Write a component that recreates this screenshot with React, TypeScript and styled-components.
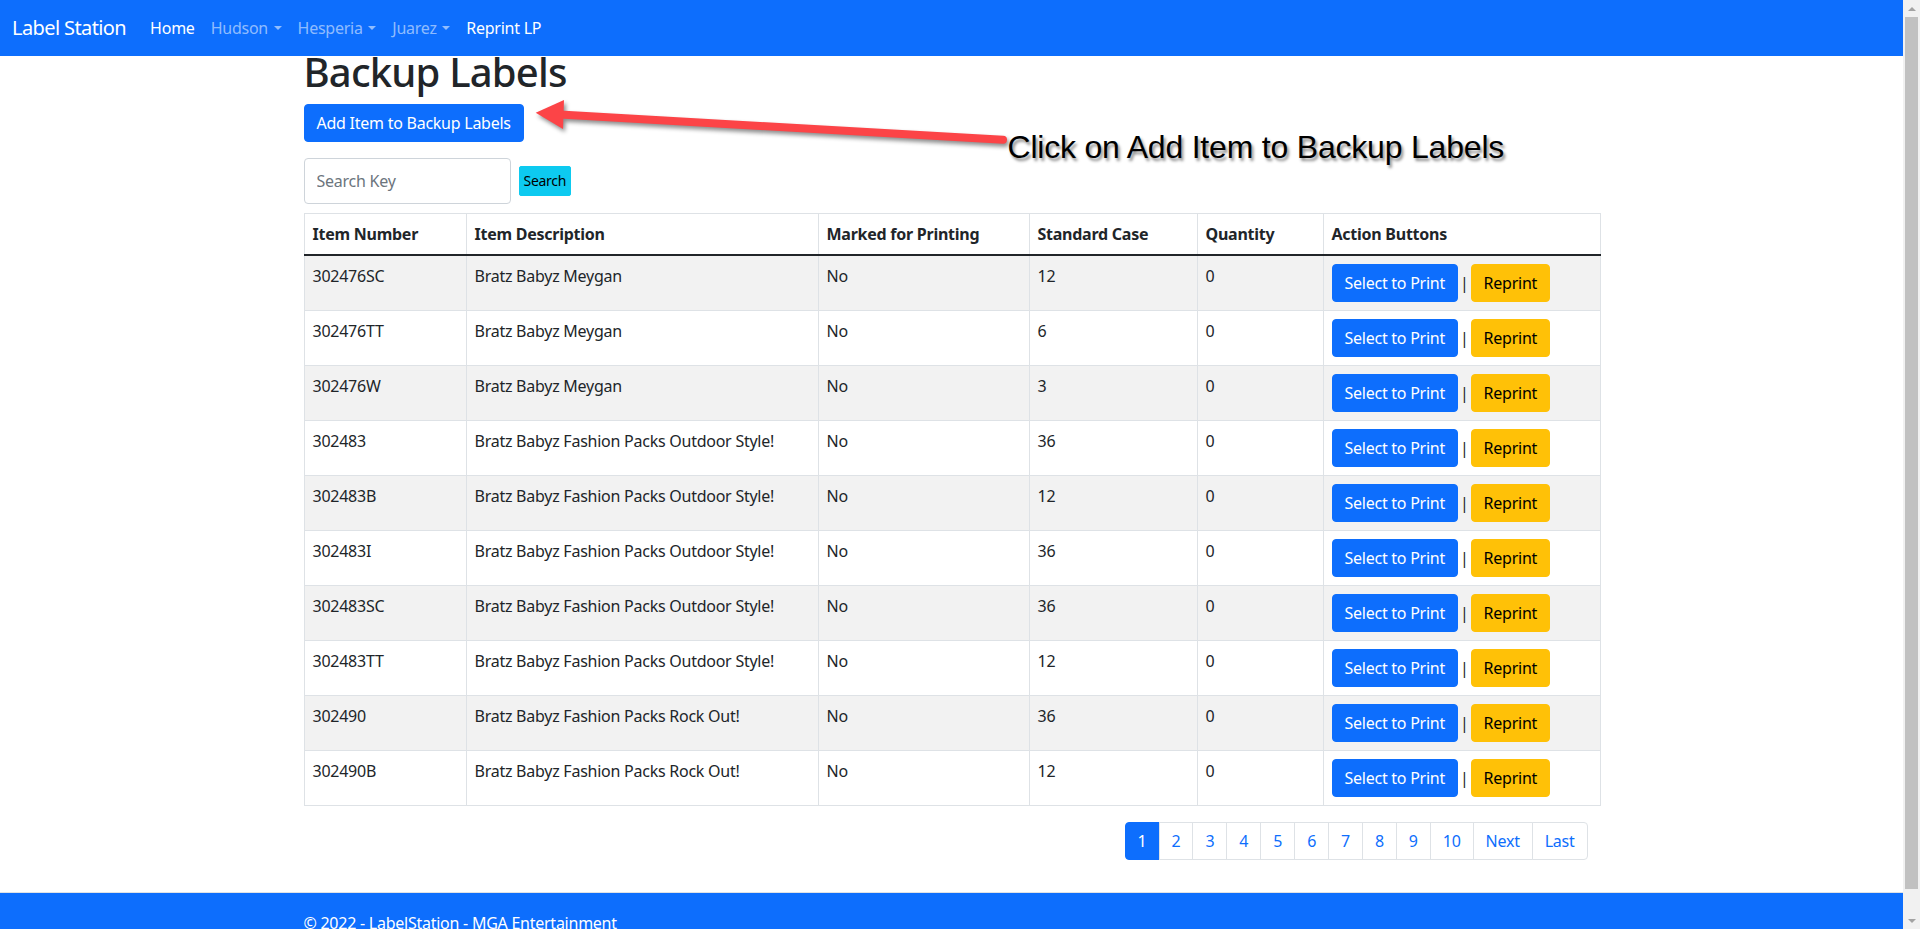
import React from "react";
import styled, { createGlobalStyle } from "styled-components";

const GlobalStyle = createGlobalStyle`
  *, *::before, *::after { box-sizing: border-box; }
  html, body { margin: 0; padding: 0; }
  body {
    font-family: "Segoe UI", "Noto Sans", "Open Sans", sans-serif;
    font-size: 16px;
    line-height: 1.5;
    letter-spacing: -0.25px;
    color: #212529;
    background: #fff;
  }
`;

const Shell = styled.div`
  display: flex;
  align-items: flex-start;
`;

const Page = styled.div`
  flex: 1;
  min-width: 0;
`;

const ScrollTrack = styled.aside`
  position: sticky;
  top: 0;
  width: 17px;
  height: 100vh;
  flex-shrink: 0;
  background: #f1f1f1;
  display: flex;
  flex-direction: column;
`;

const ScrollArrow = styled.div<{ $down?: boolean }>`
  height: 17px;
  display: flex;
  align-items: center;
  justify-content: center;
  &::after {
    content: "";
    border-left: 4px solid transparent;
    border-right: 4px solid transparent;
    ${(p) => (p.$down ? "border-top: 4px solid #a3a3a3;" : "border-bottom: 4px solid #a3a3a3;")}
  }
`;

const ScrollThumb = styled.div`
  height: 872px;
  margin: 0 2px;
  background: #c1c1c1;
`;

const ScrollSpacer = styled.div`
  flex: 1;
`;

const Navbar = styled.nav`
  background: #0d6efd;
  padding: 8px 12px;
  display: flex;
  align-items: center;
`;

const Brand = styled.a`
  font-size: 20px;
  line-height: 30px;
  padding: 5px 0;
  margin-right: 16px;
  color: #fff;
  text-decoration: none;
  white-space: nowrap;
  letter-spacing: -0.6px;
`;

const NavList = styled.ul`
  display: flex;
  list-style: none;
  margin: 0;
  padding: 0;
`;

const NavLink = styled.a<{ $active?: boolean }>`
  display: block;
  padding: 8px;
  line-height: 24px;
  color: ${(p) => (p.$active ? "#fff" : "rgba(255,255,255,0.55)")};
  text-decoration: none;
  white-space: nowrap;
`;

const Caret = styled.span`
  display: inline-block;
  margin-left: 0.35em;
  vertical-align: 0.255em;
  border-top: 0.3em solid;
  border-right: 0.3em solid transparent;
  border-left: 0.3em solid transparent;
`;

const Container = styled.div`
  position: relative;
  width: 100%;
  max-width: 1320px;
  margin: 0 auto;
  padding: 0 12px;
`;

const Main = styled.main`
  padding-bottom: 16px;
`;

const Title = styled.h1`
  font-size: 40px;
  font-weight: 500;
  line-height: 48px;
  letter-spacing: -0.8px;
  margin: -8px 0 8px;
`;

const ButtonRow = styled.div`
  margin-bottom: 16px;
`;

const Button = styled.button<{ $variant?: "primary" | "warning" }>`
  display: inline-block;
  font-family: inherit;
  font-size: 16px;
  line-height: 24px;
  letter-spacing: inherit;
  padding: 6px 12px;
  border-radius: 4px;
  border: 1px solid ${(p) => (p.$variant === "warning" ? "#ffc107" : "#0d6efd")};
  background: ${(p) => (p.$variant === "warning" ? "#ffc107" : "#0d6efd")};
  color: ${(p) => (p.$variant === "warning" ? "#000" : "#fff")};
  cursor: pointer;
  vertical-align: middle;
`;

const SearchRow = styled.form`
  display: flex;
  align-items: center;
  gap: 8px;
  margin-bottom: 9px;
`;

const SearchInput = styled.input`
  width: 207px;
  height: 46px;
  padding: 0 12px;
  font-family: inherit;
  font-size: 16px;
  letter-spacing: inherit;
  color: #212529;
  border: 1px solid #ced4da;
  border-radius: 4px;
  &::placeholder { color: #6c757d; }
`;

const SearchButton = styled.button`
  font-family: inherit;
  font-size: 14px;
  line-height: 20px;
  letter-spacing: -0.3px;
  padding: 4px 4px;
  background: #0dcaf0;
  border: 1px solid #0dcaf0;
  border-radius: 2px;
  color: #000;
`;

const Table = styled.table`
  width: 100%;
  table-layout: fixed;
  border-collapse: collapse;
  margin-bottom: 16px;
  border: 1px solid #dee2e6;
`;

const HeadCell = styled.th<{ $w: number }>`
  width: ${(p) => p.$w}px;
  text-align: left;
  font-weight: 700;
  padding: 8px;
  border: 1px solid #dee2e6;
  vertical-align: bottom;
  white-space: nowrap;
`;

const Body = styled.tbody`
  border-top: 2px solid #212529;
`;

const Row = styled.tr`
  &:nth-of-type(odd) > td { background: #f2f2f2; }
`;

const Cell = styled.td`
  padding: 8px;
  border: 1px solid #dee2e6;
  vertical-align: top;
  white-space: nowrap;
`;

const Separator = styled.span`
  margin: 0 2px;
  vertical-align: middle;
`;

const PagerWrap = styled.nav`
  display: flex;
  justify-content: flex-end;
  padding-right: 12px;
`;

const Pager = styled.ul`
  display: flex;
  list-style: none;
  padding: 0;
  margin: 0 0 16px;
`;

const PageLink = styled.a<{ $active?: boolean }>`
  display: block;
  padding: 6px 12px;
  line-height: 24px;
  margin-left: -1px;
  border: 1px solid ${(p) => (p.$active ? "#0d6efd" : "#dee2e6")};
  background: ${(p) => (p.$active ? "#0d6efd" : "#fff")};
  color: ${(p) => (p.$active ? "#fff" : "#0d6efd")};
  text-decoration: none;
  li:first-child > & { margin-left: 0; border-radius: 4px 0 0 4px; }
  li:last-child > & { border-radius: 0 4px 4px 0; }
`;

const Footer = styled.footer`
  background: #0d6efd;
  border-top: 1px solid #dee2e6;
  color: #fff;
  line-height: 60px;
  white-space: nowrap;
`;

const ArrowSvg = styled.svg`
  position: absolute;
  left: 232px;
  top: 40px;
  overflow: visible;
  filter: drop-shadow(2px 3px 2px rgba(0, 0, 0, 0.45));
  pointer-events: none;
`;

const Callout = styled.div`
  position: absolute;
  left: 716px;
  top: 83px;
  font-family: "Liberation Sans", Arial, sans-serif;
  font-size: 32px;
  line-height: 32px;
  letter-spacing: -0.2px;
  color: #000;
  white-space: nowrap;
  text-shadow: 2px 3px 3px rgba(0, 0, 0, 0.45);
  pointer-events: none;
`;

type Item = { num: string; desc: string; std: number };

const items: Item[] = [
  { num: "302476SC", desc: "Bratz Babyz Meygan", std: 12 },
  { num: "302476TT", desc: "Bratz Babyz Meygan", std: 6 },
  { num: "302476W", desc: "Bratz Babyz Meygan", std: 3 },
  { num: "302483", desc: "Bratz Babyz Fashion Packs Outdoor Style!", std: 36 },
  { num: "302483B", desc: "Bratz Babyz Fashion Packs Outdoor Style!", std: 12 },
  { num: "302483I", desc: "Bratz Babyz Fashion Packs Outdoor Style!", std: 36 },
  { num: "302483SC", desc: "Bratz Babyz Fashion Packs Outdoor Style!", std: 36 },
  { num: "302483TT", desc: "Bratz Babyz Fashion Packs Outdoor Style!", std: 12 },
  { num: "302490", desc: "Bratz Babyz Fashion Packs Rock Out!", std: 36 },
  { num: "302490B", desc: "Bratz Babyz Fashion Packs Rock Out!", std: 12 },
];

const columns: [string, number][] = [
  ["Item Number", 162],
  ["Item Description", 352],
  ["Marked for Printing", 211],
  ["Standard Case", 168],
  ["Quantity", 126],
  ["Action Buttons", 277],
];

const pages = ["1", "2", "3", "4", "5", "6", "7", "8", "9", "10", "Next", "Last"];

export default function App() {
  return (
    <>
      <GlobalStyle />
      <Shell>
        <Page>
          <Navbar>
            <Brand href="#">Label Station</Brand>
            <NavList>
              <li><NavLink $active href="#">Home</NavLink></li>
              <li><NavLink href="#">Hudson<Caret /></NavLink></li>
              <li><NavLink href="#">Hesperia<Caret /></NavLink></li>
              <li><NavLink href="#">Juarez<Caret /></NavLink></li>
              <li><NavLink $active href="#">Reprint LP</NavLink></li>
            </NavList>
          </Navbar>
          <Container>
            <Main>
              <Title>Backup Labels</Title>
              <ButtonRow>
                <Button $variant="primary">Add Item to Backup Labels</Button>
              </ButtonRow>
              <SearchRow onSubmit={(e) => e.preventDefault()}>
                <SearchInput placeholder="Search Key" />
                <SearchButton type="submit">Search</SearchButton>
              </SearchRow>
              <Table>
                <thead>
                  <tr>
                    {columns.map(([label, w]) => (
                      <HeadCell key={label} $w={w}>{label}</HeadCell>
                    ))}
                  </tr>
                </thead>
                <Body>
                  {items.map((it) => (
                    <Row key={it.num}>
                      <Cell>{it.num}</Cell>
                      <Cell>{it.desc}</Cell>
                      <Cell>No</Cell>
                      <Cell>{it.std}</Cell>
                      <Cell>0</Cell>
                      <Cell>
                        <Button $variant="primary">Select to Print</Button>
                        <Separator>|</Separator>
                        <Button $variant="warning">Reprint</Button>
                      </Cell>
                    </Row>
                  ))}
                </Body>
              </Table>
              <PagerWrap>
                <Pager>
                  {pages.map((p) => (
                    <li key={p}>
                      <PageLink href="#" $active={p === "1"}>{p}</PageLink>
                    </li>
                  ))}
                </Pager>
              </PagerWrap>
            </Main>
            <ArrowSvg width="500" height="80" viewBox="0 0 500 80">
              <line x1="36" y1="26.5" x2="479" y2="51.7" stroke="#fc4447" strokeWidth="8" strokeLinecap="round" />
              <polygon points="11.7,24.7 40,12 39,41" fill="#fc4447" />
            </ArrowSvg>
            <Callout>Click on Add Item to Backup Labels</Callout>
          </Container>
          <Footer>
            <Container>© 2022 - LabelStation - MGA Entertainment</Container>
          </Footer>
        </Page>
        <ScrollTrack aria-hidden="true">
          <ScrollArrow />
          <ScrollThumb />
          <ScrollSpacer />
          <ScrollArrow $down />
        </ScrollTrack>
      </Shell>
    </>
  );
}
